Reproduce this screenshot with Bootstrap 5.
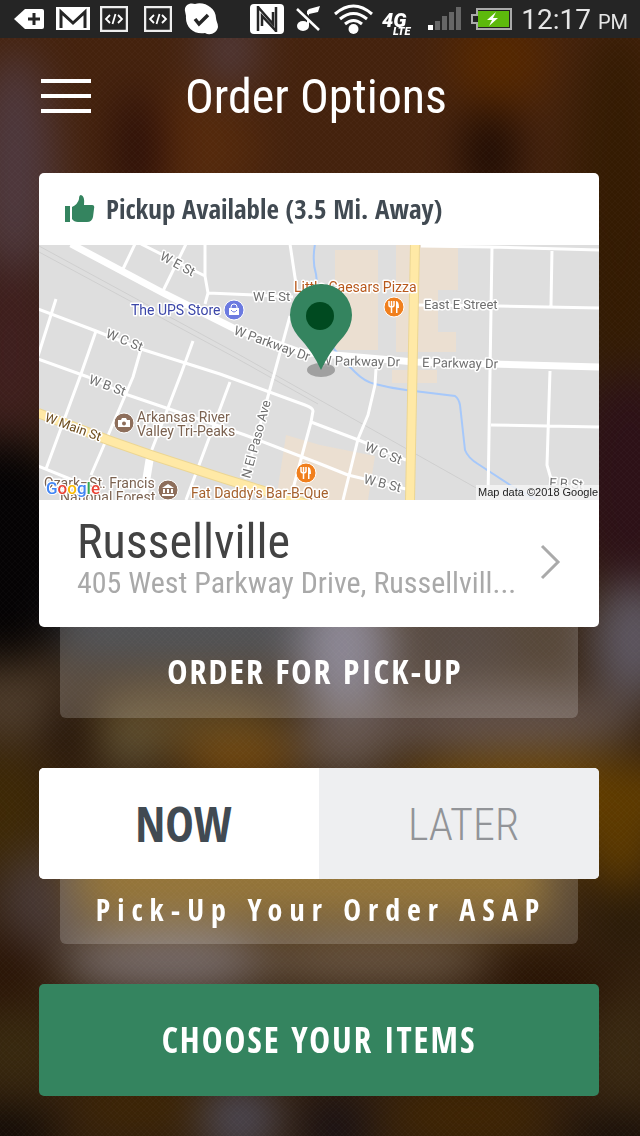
<!DOCTYPE html>
<html lang="en">
<head>
<meta charset="utf-8">
<meta name="viewport" content="width=device-width, initial-scale=1">
<title>Order Options</title>
<link href="https://cdn.jsdelivr.net/npm/bootstrap@5.3.0/dist/css/bootstrap.min.css" rel="stylesheet">
<style>
  :root { --brand: #34845f; --slate: #414a52; }
  body { font-family: "Roboto Condensed", Roboto, sans-serif; background: #2b1a0b; color: #fff; min-height: 100vh; }
  svg { display: block; flex: none; }
  .backdrop { position: fixed; inset: 0; width: 100%; height: 100%; z-index: -1; }
  .statusbar { height: 38px; background: #252525; padding: 0 12px 0 14px; font-family: Roboto, sans-serif; color: #e6e6e6; }
  .clock { font-size: 28px; line-height: 34px; padding-top: 4px; }
  .clock small { font-size: 20px; }
  .topbar { height: 135px; padding: 31px 40px 0; }
  .topbar h1 { font-size: 48px; line-height: 56px; }
  .menu-btn { width: 52px; height: 56px; padding: 0; border: 0; }
  .side-space { width: 60px; }
  .page-main { padding: 0 41px 40px 39px; }
  .block { border-radius: 5px; overflow: hidden; background: #fff; }
  .avail { height: 72px; padding-left: 26px; gap: 11px; font: 700 27px/36px "Open Sans Condensed", "Roboto Condensed", sans-serif; color: var(--slate); }
  .map svg { width: 100%; height: auto; }
  .store { padding: 17px 38px 28px 38px; color: #434343; text-decoration: none; min-height: 127px; }
  .store h2 { font-size: 48px; line-height: 50px; margin: 0; }
  .store p { font-size: 30px; line-height: 32px; margin: 0; color: #a9a9a9; }
  .caption-tab { margin: 0 21px; background: rgba(255,255,255,.18); border-radius: 0 0 6px 6px; font-family: "Open Sans Condensed", "Roboto Condensed", sans-serif; font-weight: 700; text-align: center; white-space: nowrap; }
  .caption-tab.tall { height: 91px; line-height: 88px; padding-right: 8px; font-size: 34px; letter-spacing: 2px; margin-bottom: 50px; }
  .caption-tab.short { height: 65px; line-height: 62px; padding-left: 4px; font-size: 30px; letter-spacing: 7px; margin-bottom: 40px; }
  .when .btn { height: 111px; border: 0; border-radius: 0; padding: 0 0 0 9px; }
  .when .btn-check + .btn { background: #eeeff1; color: #929498; font: 300 44px/114px "Roboto Condensed", Roboto, sans-serif; }
  .when .btn-check:checked + .btn { background: #fff; color: var(--slate); font: 700 48px/111px "Open Sans Condensed", "Roboto Condensed", sans-serif; }
  .go { height: 112px; border: 0; border-radius: 5px; background: var(--brand); color: #fff; font: 700 35px/112px "Open Sans Condensed", "Roboto Condensed", sans-serif; letter-spacing: 2px; padding: 0; }
  .map text { font-family: Roboto, sans-serif; font-size: 13px; fill: #6f6f6f; stroke: #fff; stroke-width: 3px; stroke-linejoin: round; paint-order: stroke; }
  .map .poi { font-size: 14px; }
</style>
</head>
<body>
<svg class="backdrop" viewBox="0 0 640 1136" preserveAspectRatio="none" aria-hidden="true">
  <defs>
    <filter id="soft" filterUnits="userSpaceOnUse" x="-100" y="-100" width="840" height="1336" color-interpolation-filters="sRGB"><feGaussianBlur stdDeviation="22"/></filter>
    <pattern id="mesh" width="6" height="6" patternUnits="userSpaceOnUse"><path d="M0 0l6 6M6 0L0 6" stroke="#fff" stroke-opacity=".02" stroke-width="1"/></pattern>
  </defs>
  <rect width="640" height="1136" fill="#33200e"/>
  <g filter="url(#soft)">
    <rect x="-60" y="-60" width="760" height="300" fill="#44220d"/>
    <ellipse cx="15" cy="180" rx="42" ry="130" fill="#4e383d"/>
    <ellipse cx="230" cy="50" rx="30" ry="40" fill="#51393a"/>
    <ellipse cx="190" cy="150" rx="70" ry="60" fill="#54290c"/>
    <ellipse cx="140" cy="150" rx="20" ry="60" fill="#260a07"/>
    <ellipse cx="500" cy="60" rx="50" ry="50" fill="#552700"/>
    <ellipse cx="490" cy="155" rx="24" ry="50" fill="#1a0801"/>
    <ellipse cx="620" cy="200" rx="50" ry="180" fill="#341b02"/>
    <ellipse cx="10" cy="350" rx="50" ry="90" fill="#3f1f1e"/>
    <ellipse cx="0" cy="550" rx="90" ry="110" fill="#050304"/>
    <ellipse cx="630" cy="480" rx="60" ry="110" fill="#2d1117"/>
    <ellipse cx="635" cy="640" rx="45" ry="60" fill="#5d5660"/>
    <rect x="60" y="600" width="260" height="60" fill="#2c2f35"/>
    <ellipse cx="20" cy="705" rx="70" ry="36" fill="#4c3b2b"/>
    <ellipse cx="500" cy="720" rx="140" ry="34" fill="#62514a"/>
    <ellipse cx="460" cy="640" rx="55" ry="34" fill="#35261f"/>
    <ellipse cx="345" cy="650" rx="46" ry="70" fill="#736d7c"/>
    <ellipse cx="345" cy="740" rx="50" ry="36" fill="#66564d"/>
    <ellipse cx="180" cy="720" rx="110" ry="34" fill="#5b4523"/>
    <ellipse cx="72" cy="725" rx="22" ry="34" fill="#1e0f05"/>
    <ellipse cx="130" cy="745" rx="26" ry="28" fill="#5f5236"/>
    <ellipse cx="540" cy="795" rx="150" ry="40" fill="#6b4300"/>
    <ellipse cx="240" cy="760" rx="60" ry="24" fill="#75490e"/>
    <ellipse cx="0" cy="810" rx="50" ry="60" fill="#3e2906"/>
    <rect x="70" y="840" width="480" height="80" fill="#80590f"/>
    <ellipse cx="40" cy="900" rx="40" ry="50" fill="#483936"/>
    <ellipse cx="170" cy="960" rx="110" ry="34" fill="#766a68"/>
    <ellipse cx="370" cy="960" rx="130" ry="24" fill="#6d5947"/>
    <ellipse cx="540" cy="985" rx="80" ry="22" fill="#261001"/>
    <ellipse cx="620" cy="830" rx="40" ry="60" fill="#5d3a00"/>
    <ellipse cx="630" cy="920" rx="30" ry="34" fill="#281a07"/>
    <ellipse cx="0" cy="970" rx="46" ry="34" fill="#2a1406"/>
    <ellipse cx="15" cy="1050" rx="50" ry="40" fill="#38290f"/>
    <ellipse cx="625" cy="1050" rx="30" ry="60" fill="#3a2a12"/>
    <ellipse cx="140" cy="1105" rx="70" ry="24" fill="#3f2604"/>
    <ellipse cx="240" cy="1120" rx="40" ry="36" fill="#4c4854"/>
    <ellipse cx="335" cy="1130" rx="34" ry="40" fill="#1a1114"/>
    <ellipse cx="470" cy="1115" rx="80" ry="30" fill="#402502"/>
    <ellipse cx="0" cy="1136" rx="60" ry="26" fill="#0e0805"/>
    <ellipse cx="620" cy="1140" rx="60" ry="24" fill="#150c08"/>
  </g>
  <rect width="640" height="1136" fill="url(#mesh)"/>
</svg>

<div class="statusbar d-flex align-items-center justify-content-between">
  <div class="d-flex align-items-center gap-2">
    <svg width="34" height="24" viewBox="0 0 34 24"><path d="M0 12L11 2H28q2 0 2 2V20q0 2-2 2H11z" fill="#fff"/><path d="M20 6v12M14 12h12" stroke="#252525" stroke-width="3"/></svg>
    <svg width="36" height="24" viewBox="0 0 36 24"><rect width="34" height="23" fill="#fff"/><path d="M5 21V5L17 16 29 5V21" fill="none" stroke="#252525" stroke-width="3"/></svg>
    <svg width="28" height="26" viewBox="0 0 28 26"><rect x="1" y="1" width="26" height="24" fill="none" stroke="#eee" stroke-width="2.500"/><path d="M10 9l-4 4 4 4M18 9l4 4-4 4M15.500 8l-3 10" fill="none" stroke="#fff" stroke-width="1.800"/></svg>
    <svg class="ms-2" width="28" height="26" viewBox="0 0 28 26"><rect x="1" y="1" width="26" height="24" fill="none" stroke="#eee" stroke-width="2.500"/><path d="M10 9l-4 4 4 4M18 9l4 4-4 4M15.500 8l-3 10" fill="none" stroke="#fff" stroke-width="1.800"/></svg>
    <svg class="ms-1" width="34" height="32" viewBox="0 0 34 32"><path d="M1 8C0 3 5-1 11 1c9-3 21 4 21 14 0 3 2 5 2 9-1 6-8 9-13 6C10 32 1 24 2 13z" fill="#fff"/><path d="M11 16l4 5 9-9" fill="none" stroke="#252525" stroke-width="3.500"/></svg>
  </div>
  <div class="d-flex align-items-center gap-2">
    <svg class="me-1" width="34" height="30" viewBox="0 0 34 30"><rect width="34" height="30" rx="4" fill="#fff"/><path d="M8 2V27M8 3L23 20V8M26 28V3M26 27L12 12V22" fill="none" stroke="#252525" stroke-width="2.500"/></svg>
    <svg class="me-1" width="26" height="28" viewBox="0 0 26 28"><ellipse cx="7" cy="21" rx="6" ry="5" fill="#fff"/><path d="M11 21V6l2-2 11-3-2 6-9 2v12z" fill="#fff"/><path d="M3 4L25 25" stroke="#252525" stroke-width="4"/><path d="M1 4L23 25" stroke="#fff" stroke-width="2.500"/></svg>
    <svg width="39" height="30" viewBox="0 0 39 30"><g fill="none" stroke="#fff" stroke-width="3"><path d="M1 10Q19.500-6 38 10"/><path d="M6 15q13.500-11 27 0"/><path d="M11 20q8.500-7 17 0"/></g><circle cx="19.500" cy="25" r="5" fill="#fff"/></svg>
    <svg width="38" height="38" viewBox="0 0 38 38" font-family="Roboto, sans-serif" font-weight="900" font-style="italic" fill="#fff"><text x="1" y="27" font-size="20">4G</text><text x="12" y="35" font-size="11">LTE</text></svg>
    <svg width="36" height="24" viewBox="0 0 36 24"><path d="M1 18h5v5H1z" fill="#fff"/><path d="M8 14h5v9H8zM15 9h5v14h-5zM22 5h5v18h-5zM29 0h5v23h-5z" fill="#666"/></svg>
    <svg width="42" height="22" viewBox="0 0 42 22"><path d="M6 1H40V21H6V15H1V7H6z" fill="#222" stroke="#aaa" stroke-width="2"/><rect x="7" y="3" width="31" height="16" fill="#5db90c"/><path d="M25 4l-9 8h5l-3 6 9-8h-5z" fill="#fff"/></svg>
    <span class="clock">12:17 <small>PM</small></span>
  </div>
</div>

<header class="topbar d-flex justify-content-between align-items-start">
  <button class="btn menu-btn" type="button" aria-label="Menu"><svg width="52" height="56" viewBox="0 0 52 56"><path d="M1 12H51M1 27H51M1 42H51" stroke="#fff" stroke-width="4"/></svg></button>
  <h1 class="m-0 fw-normal">Order Options</h1>
  <div class="side-space"></div>
</header>

<main class="page-main">
  <section class="block">
    <div class="avail d-flex align-items-center">
      <svg width="30" height="28" viewBox="0 0 30 28" fill="var(--brand)"><path d="M0 11h5v16H0zM7 12q6-3 7-8 0-4 2-4 4 1 3 10h8q3 0 2 4l-1 8q-1 5-6 5H13q-4 0-6-3z"/></svg>
      <span>Pickup Available (3.5 Mi. Away)</span>
    </div>
    <div class="map">
      <svg viewBox="39 245 560 255" role="img" aria-label="Map of Russellville">
        <rect x="39" y="245" width="560" height="255" fill="#dedede"/>
        <path fill="#ebdfd1" d="M335 250h43v100h-43zM396 245h62v45h-20v42h18v20h-60zM392 370h45v13h-45zM286 435l34 10 55 11-7 44h-92z"/>
        <g fill="none" stroke="#cfcfcf"><path d="M39 246L238 354 478 489M39 252L236 358 318 404"/></g>
        <path d="M315 244q-3 18 1 30L322 330q10 20 33 42 10 10 20 12 15 4 31 6l49 6q4 3 5 9l5 45q3 8 13 14l32 21 25 14" fill="none" stroke="#a6c8fa" stroke-width="2"/>
        <g fill="none" stroke="#fff" stroke-width="3" stroke-linejoin="round">
          <path d="M141 244l64 32 3 17 47 2 38 2M205 244v32M208 293l-3 11M135 244l-12 25M186 244l-23 47M290 244l6 40M290 316l-15 55-30 108"/>
          <path d="M38 309l58 22 45 18 79 25 85 31q8 3 8 6l-2 11-21 78M311 422l50 19 45 19M38 359l50 18 37 17 53 18 67 23 73 28 30 12 58 14"/>
          <path d="M56 299L38 356M96 331L81 374 46 469M141 349l-8 28-32 75-10 23M193 341l-12 33-30 78M230 382l-44 118M38 466l52 21"/>
          <path d="M421 246l70 1 108 3M492 247l-4 252M552 249l-1 57M418 305l80 1 101 2M550 371l-3 94 4 14M491 425l108 2M376 369l-1 16-7 30-10 24-15 61"/>
        </g>
        <path d="M71 244l94 50 70 35 65 23 115 10 184 5" fill="none" stroke="#fff" stroke-width="7"/>
        <path d="M150 457l-7 43" stroke="#fff" stroke-width="8"/>
        <path d="M38 413l70 27 43 15 74 24 85 26M415 244l-5 257" fill="none" stroke="#ecd694" stroke-width="10"/>
        <path d="M38 413l70 27 43 15 74 24 85 26M415 244l-5 257" fill="none" stroke="#ffe9a6" stroke-width="8"/>
        <text transform="translate(159 259) rotate(28)">W E St</text>
        <text x="253" y="301">W E St</text>
        <text transform="translate(105 337) rotate(22)">W C St</text>
        <text transform="translate(88 383) rotate(20)">W B St</text>
        <text transform="translate(233 334) rotate(20)">W Parkway Dr</text>
        <text x="320" y="365" transform="rotate(1 320 365)">W Parkway Dr</text>
        <text x="422" y="367" transform="rotate(1 422 367)">E Parkway Dr</text>
        <text x="424" y="309">East E Street</text>
        <text transform="translate(44 421) rotate(20)" style="fill:#6d4c1c">W Main St</text>
        <text transform="translate(250 479) rotate(-75)">N El Paso Ave</text>
        <text transform="translate(364 450) rotate(22)">W C St</text>
        <text transform="translate(363 483) rotate(14)">W B St</text>
        <text x="549" y="487" transform="rotate(4 549 487)">E B St</text>
        <text class="poi" x="131" y="315" style="fill:#3b46a8">The UPS Store</text>
        <text class="poi" x="294" y="292" style="fill:#b8591c">Little Caesars Pizza</text>
        <g style="--c:#7b6250"><text class="poi" x="137" y="422" style="fill:var(--c)">Arkansas River</text><text class="poi" x="137" y="436" style="fill:var(--c)">Valley Tri-Peaks</text>
        <text class="poi" x="44" y="488" style="fill:var(--c)">Ozark–St. Francis</text><text class="poi" x="60" y="502" style="fill:var(--c)">National Forest</text></g>
        <text class="poi" x="191" y="498" style="fill:#a5612d">Fat Daddy's Bar-B-Que</text>
        <g stroke="#fff"><circle cx="234" cy="310" r="10" fill="#6b7ae0"/><circle cx="394" cy="307" r="10" fill="#f07f1d"/><circle cx="306" cy="473" r="10" fill="#f07f1d"/><circle cx="124" cy="423" r="10" fill="#8d6e5b"/><circle cx="168" cy="490" r="10" fill="#8d6e5b"/></g>
        <path d="M229 308h10v7h-10z" fill="#fff"/><path d="M231 308v-1a3 3 0 0 1 6 0v1" fill="none" stroke="#fff"/><path d="M231 310q3 4 6 0" fill="none" stroke="#6b7ae0"/>
        <g id="fork"><path d="M389 301v4q0 2 2.500 2t2.500-2v-4M391.500 301v12" fill="none" stroke="#fff" stroke-width="1.500"/><path d="M396 313v-12q3 0 3 7h-1.500v5z" fill="#fff"/></g>
        <use href="#fork" x="-88" y="166"/>
        <path d="M118 420h3l1-2h4l1 2h3v7h-12z" fill="#fff"/><circle cx="124" cy="423.500" r="2" fill="#8d6e5b"/>
        <path d="M162 488l6-4 6 4zM162 494h12v2h-12zM163 489h2v4h-2zM167 489h2v4h-2zM171 489h2v4h-2z" fill="#fff"/>
        <ellipse cx="321" cy="370" rx="14" ry="7" fill="#777" fill-opacity=".6"/>
        <path d="M321 370Q313 352 298 336 290 326 290 315A31 31 0 0 1 352 315Q352 326 344 336 329 352 321 370z" fill="#34845f"/><circle cx="320" cy="316" r="14" fill="#004a20"/>
        <text x="46" y="494" style="font:500 17px Roboto,sans-serif;stroke-width:2px"><tspan fill="#4285f4">G</tspan><tspan fill="#ea4335">o</tspan><tspan fill="#fbbc05">o</tspan><tspan fill="#4285f4">g</tspan><tspan fill="#34a853">l</tspan><tspan fill="#ea4335">e</tspan></text>
        <rect x="476" y="485" width="123" height="15" fill="#f5f5f5" fill-opacity=".85"/>
        <text x="478" y="496" style="font:11px 'Liberation Sans',sans-serif;fill:#222;stroke:none">Map data ©2018 Google</text>
      </svg>
    </div>
    <a class="store d-flex align-items-center justify-content-between" href="#">
      <div>
        <h2 class="fw-normal">Russellville</h2>
        <p class="text-nowrap">405 West Parkway Drive, Russellvill...</p>
      </div>
      <svg class="mt-2" width="22" height="36" viewBox="0 0 22 36"><path d="M3 2L19 18 3 34" fill="none" stroke="#aaa" stroke-width="3"/></svg>
    </a>
  </section>
  <div class="caption-tab tall">ORDER FOR PICK-UP</div>

  <div class="block when d-flex" role="group" aria-label="Pick-up time">
    <input class="btn-check" type="radio" name="when" id="now" checked><label class="btn w-50" for="now">NOW</label>
    <input class="btn-check" type="radio" name="when" id="later"><label class="btn w-50" for="later">LATER</label>
  </div>
  <div class="caption-tab short">Pick-Up Your Order ASAP</div>

  <button class="btn go w-100" type="button">CHOOSE YOUR ITEMS</button>
</main>
<script src="https://cdn.jsdelivr.net/npm/bootstrap@5.3.0/dist/js/bootstrap.bundle.min.js"></script>
</body>
</html>
